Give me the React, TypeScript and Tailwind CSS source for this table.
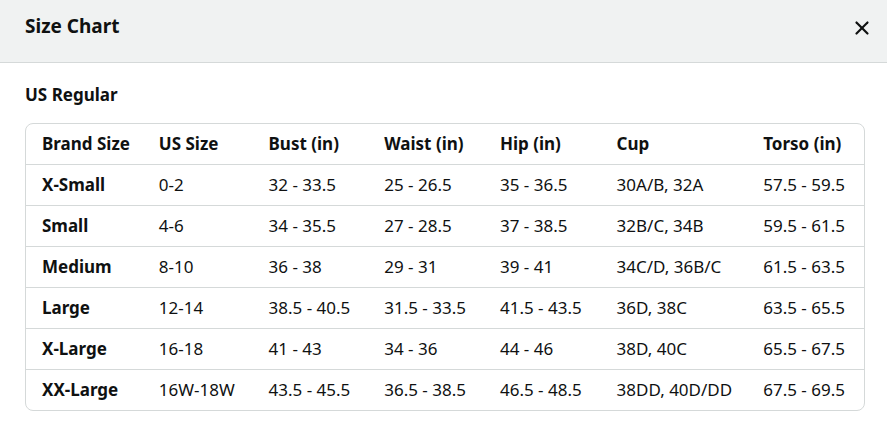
import { X } from "lucide-react";

const headers = ["Brand Size", "US Size", "Bust (in)", "Waist (in)", "Hip (in)", "Cup", "Torso (in)"];

const rows = [
  ["X-Small", "0-2", "32 - 33.5", "25 - 26.5", "35 - 36.5", "30A/B, 32A", "57.5 - 59.5"],
  ["Small", "4-6", "34 - 35.5", "27 - 28.5", "37 - 38.5", "32B/C, 34B", "59.5 - 61.5"],
  ["Medium", "8-10", "36 - 38", "29 - 31", "39 - 41", "34C/D, 36B/C", "61.5 - 63.5"],
  ["Large", "12-14", "38.5 - 40.5", "31.5 - 33.5", "41.5 - 43.5", "36D, 38C", "63.5 - 65.5"],
  ["X-Large", "16-18", "41 - 43", "34 - 36", "44 - 46", "38D, 40C", "65.5 - 67.5"],
  ["XX-Large", "16W-18W", "43.5 - 45.5", "36.5 - 38.5", "46.5 - 48.5", "38DD, 40D/DD", "67.5 - 69.5"],
];

const colWidths = ["w-[117px]", "w-[110px]", "w-[116px]", "w-[116px]", "w-[117px]", "w-[147px]", "w-[117px]"];

export default function App() {
  return (
    <div className="w-[887px] h-[440px] bg-white text-[#0f1111] font-['Noto_Sans',sans-serif] overflow-hidden">
      <div className="h-[63px] bg-[#f0f2f2] border-b border-[#d5d9d9] flex items-center justify-between pl-[25px] pr-[14px] pb-[10px]">
        <h1 className="text-[19px] font-bold">Size Chart</h1>
        <X className="w-[22px] h-[22px] mt-[4px]" strokeWidth={2.4} />
      </div>
      <div className="px-[25px] pt-[22px]">
        <h2 className="text-[17px] font-bold leading-[20px]">US Regular</h2>
        <div className="mt-[18px] w-[840px] border border-[#d5d9d9] rounded-[8px] overflow-hidden">
          <table className="w-full border-collapse text-[17px]">
            <thead>
              <tr className="h-[40px]">
                {headers.map((h, i) => (
                  <th key={h} className={`${colWidths[i]} pl-[16px] text-left font-bold`}>
                    {h}
                  </th>
                ))}
              </tr>
            </thead>
            <tbody>
              {rows.map((r) => (
                <tr key={r[0]} className="h-[41px] border-t border-[#d5d9d9]">
                  {r.map((c, i) => (
                    <td key={i} className={`pl-[16px] ${i === 0 ? "font-bold" : ""}`}>
                      {c}
                    </td>
                  ))}
                </tr>
              ))}
            </tbody>
          </table>
        </div>
      </div>
    </div>
  );
}
